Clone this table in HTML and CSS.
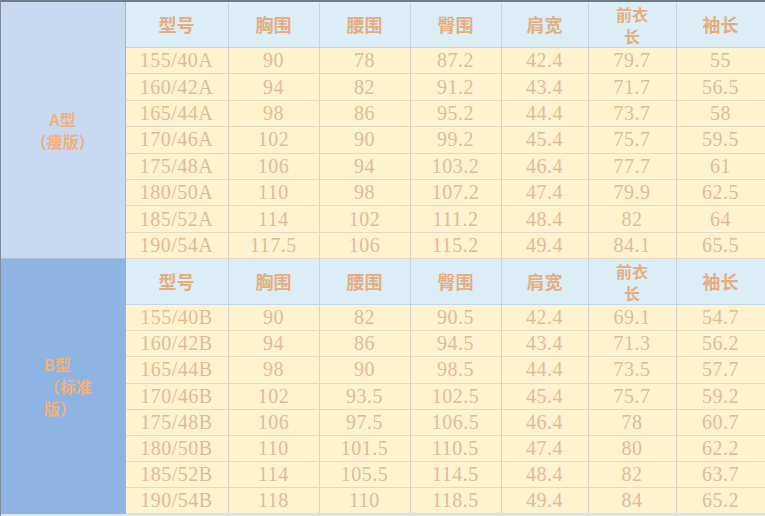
FILE: index.html
```html
<!DOCTYPE html>
<html lang="zh">
<head>
<meta charset="utf-8">
<link rel="stylesheet" href="styles.css">
</head>
<body>
<div class="sheet">
<table class="size-table">
<colgroup>
<col class="c-label"><col class="c-model"><col class="c-n"><col class="c-n"><col class="c-n"><col class="c-s"><col class="c-f"><col class="c-l">
</colgroup>
<tbody class="sec sec-a">
<tr class="head">
<th class="label label-a" rowspan="9"><span class="label-text center">A型<br>（瘦版）</span></th>
<th>型号</th><th>胸围</th><th>腰围</th><th>臀围</th><th>肩宽</th><th class="two"><span class="ln">前衣</span><span class="ln">长</span></th><th>袖长</th>
</tr>
<tr><td>155/40A</td><td>90</td><td>78</td><td>87.2</td><td>42.4</td><td>79.7</td><td>55</td></tr>
<tr><td>160/42A</td><td>94</td><td>82</td><td>91.2</td><td>43.4</td><td>71.7</td><td>56.5</td></tr>
<tr><td>165/44A</td><td>98</td><td>86</td><td>95.2</td><td>44.4</td><td>73.7</td><td>58</td></tr>
<tr><td>170/46A</td><td>102</td><td>90</td><td>99.2</td><td>45.4</td><td>75.7</td><td>59.5</td></tr>
<tr><td>175/48A</td><td>106</td><td>94</td><td>103.2</td><td>46.4</td><td>77.7</td><td>61</td></tr>
<tr><td>180/50A</td><td>110</td><td>98</td><td>107.2</td><td>47.4</td><td>79.9</td><td>62.5</td></tr>
<tr><td>185/52A</td><td>114</td><td>102</td><td>111.2</td><td>48.4</td><td>82</td><td>64</td></tr>
<tr><td>190/54A</td><td>117.5</td><td>106</td><td>115.2</td><td>49.4</td><td>84.1</td><td>65.5</td></tr>
</tbody>
<tbody class="sec sec-b">
<tr class="head">
<th class="label label-b" rowspan="9"><span class="label-text left">B型<br>（标准版）</span></th>
<th>型号</th><th>胸围</th><th>腰围</th><th>臀围</th><th>肩宽</th><th class="two"><span class="ln">前衣</span><span class="ln">长</span></th><th>袖长</th>
</tr>
<tr><td>155/40B</td><td>90</td><td>82</td><td>90.5</td><td>42.4</td><td>69.1</td><td>54.7</td></tr>
<tr><td>160/42B</td><td>94</td><td>86</td><td>94.5</td><td>43.4</td><td>71.3</td><td>56.2</td></tr>
<tr><td>165/44B</td><td>98</td><td>90</td><td>98.5</td><td>44.4</td><td>73.5</td><td>57.7</td></tr>
<tr><td>170/46B</td><td>102</td><td>93.5</td><td>102.5</td><td>45.4</td><td>75.7</td><td>59.2</td></tr>
<tr><td>175/48B</td><td>106</td><td>97.5</td><td>106.5</td><td>46.4</td><td>78</td><td>60.7</td></tr>
<tr><td>180/50B</td><td>110</td><td>101.5</td><td>110.5</td><td>47.4</td><td>80</td><td>62.2</td></tr>
<tr><td>185/52B</td><td>114</td><td>105.5</td><td>114.5</td><td>48.4</td><td>82</td><td>63.7</td></tr>
<tr><td>190/54B</td><td>118</td><td>110</td><td>118.5</td><td>49.4</td><td>84</td><td>65.2</td></tr>
</tbody>
</table>
<div class="tail"></div>
</div>
</body>
</html>
```
FILE: styles.css
```css
html, body {
  margin: 0;
  padding: 0;
  background: #dde6ef;
}
.sheet {
  width: 765px;
  height: 516px;
  overflow: hidden;
  border-top: 2px solid #6f7b89;
  border-left: 1px solid #7d8a9a;
  box-sizing: border-box;
  background: #dce5ee;
}
.size-table {
  border-collapse: collapse;
  table-layout: fixed;
  width: 764px;
}
.c-label { width: 124px; }
.c-model { width: 103px; }
.c-n { width: 91px; }
.c-s { width: 87px; }
.c-f { width: 88px; }
.c-l { width: 89px; }

.size-table th,
.size-table td {
  padding: 0;
  text-align: center;
  vertical-align: middle;
  white-space: nowrap;
}
.head th {
  background: #dbeef5;
  color: #e6ad80;
  font-family: "Noto Sans CJK SC", sans-serif;
  font-weight: 700;
  font-size: 18px;
  line-height: 21px;
  border: 1px solid #c3d7e2;
  border-top: none;
}
.sec-a .head th { height: 45px; }
.sec-b .head th { height: 45px; border-top: 1px solid #c3d7e2; }
.head th.two { font-size: 16px; }
.head th.two .ln {
  display: block;
  height: 22px;
  line-height: 22px;
}

.size-table td {
  background: #fff2cf;
  color: #ddbd97;
  font-family: "Liberation Serif", serif;
  font-size: 20px;
  letter-spacing: 0.5px;
  border: 1px solid #e6d9c2;
  border-left-color: #d9d0c6;
  border-right-color: #d9d0c6;
}
.sec-a td { height: 25.4px; }
.sec-b td { height: 25.15px; }

.size-table th.label {
  border: none;
  border-right: 1px solid #9fb4cc;
  color: #f2b07c;
  font-family: "Noto Sans CJK SC", sans-serif;
  font-weight: 700;
  font-size: 16px;
  line-height: 22px;
  white-space: normal;
}
.size-table th.label-a { background: #c6d9f1; }
.size-table th.label-b { background: #8db4e2; border-top: 1px solid #a9c2de; }
.label-text {
  display: inline-block;
  width: 64px;
}
.label-text.left {
  width: 50px;
  padding-left: 12px;
  text-align: left;
}
.tail {
  height: 6px;
  background: #dde6ef;
}
```
